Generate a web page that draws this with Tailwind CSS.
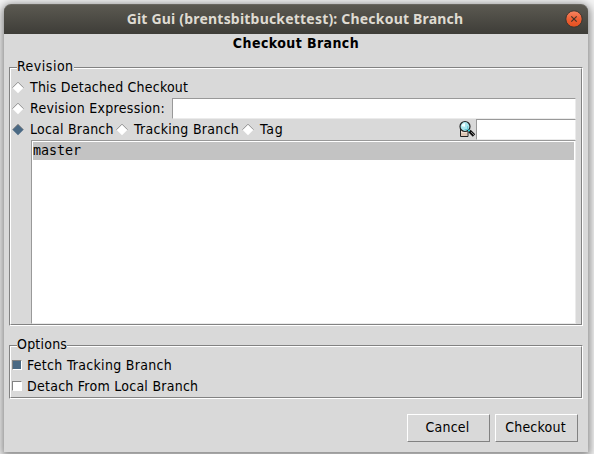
<!DOCTYPE html>
<html lang="en">
<head>
<meta charset="utf-8">
<title>Git Gui</title>
<script src="https://cdn.jsdelivr.net/npm/@tailwindcss/browser@4"></script>
</head>
<body class="w-[594px] h-[454px] overflow-hidden bg-[#f4f4f4] pt-1 pl-1 font-['DejaVu_Sans_Condensed','DejaVu_Sans',sans-serif] [font-stretch:condensed] text-[14px] tracking-[0.22px] text-black whitespace-nowrap">
<svg class="hidden">
  <symbol id="radio" viewBox="0 0 12 12"><path d="M6 0.2 11.5 5.7 6 11.2 0.5 5.7Z" fill="currentColor"/><path d="M0.5 5.7 6 0.2 11.5 5.7" fill="none" stroke="#858585" stroke-width="0.9"/></symbol>
</svg>
<main class="w-[584px] h-[448px] bg-[#d9d9d9] rounded-t-[7px] shadow-[0_2px_9px_2px_rgba(0,0,0,0.45)] flex flex-col">
  <header class="h-[30px] shrink-0 relative rounded-t-[7px] bg-linear-to-b from-[#5b5951] to-[#3e3d38] border-t border-[#696760] flex items-center justify-center text-[#dfdbd2] font-bold">
    <h1 class="font-['Noto_Sans','Open_Sans',sans-serif] [font-stretch:normal] text-[14px] tracking-[0.2px] pb-[2px] pr-[2px]">Git Gui (brentsbitbuckettest): Checkout Branch</h1>
    <svg class="absolute right-[5px] top-[5px]" width="18" height="18" viewBox="0 0 18 18">
      <defs><linearGradient id="o" x1="0" y1="0" x2="0" y2="1"><stop offset="0" stop-color="#f58563"/><stop offset="0.5" stop-color="#ef6035"/><stop offset="1" stop-color="#e2501f"/></linearGradient></defs>
      <circle cx="9" cy="9" r="8.2" fill="url(#o)" stroke="#383630"/><path d="M6.3 6.3 11.7 11.7M11.7 6.3 6.3 11.7" stroke="#443328" stroke-width="1.2"/>
    </svg>
  </header>
  <h2 class="h-[18px] leading-[18px] text-center font-bold tracking-[0.42px]">Checkout Branch</h2>
  <section class="mt-[15px] ml-[5px] w-[574px] h-[259px] border border-[#828282] border-r-white border-b-white">
    <div class="h-[257px] w-[572px] border border-white border-r-[#828282] border-b-[#828282]">
      <div class="h-[8px]"><span class="relative -top-[13px] left-[6px] inline-block h-[18px] leading-[18px] bg-[#d9d9d9] tracking-[0.5px]">Revision</span></div>
      <div class="h-[21px] flex items-center pl-px"><svg class="size-3 text-white"><use href="#radio"/></svg><span class="ml-[6px]">This Detached Checkout</span></div>
      <div class="h-[21px] flex items-center pl-px"><svg class="size-3 text-white"><use href="#radio"/></svg><span class="ml-[6px] w-[142px] tracking-[0.3px]">Revision Expression:</span><div class="w-[404px] h-[21px] bg-white border border-[#999] border-r-[#ebebeb] border-b-[#ebebeb]"></div></div>
      <div class="h-[21px] flex items-center pl-px">
        <svg class="size-3 text-[#4a6984]"><use href="#radio"/></svg><span class="ml-[6px] w-[86px]">Local Branch</span>
        <svg class="size-3 text-white"><use href="#radio"/></svg><span class="ml-[6px] w-[108px] tracking-[0.3px]">Tracking Branch</span>
        <svg class="size-3 text-white"><use href="#radio"/></svg><span class="ml-[6px] tracking-[0.8px]">Tag</span>
        <svg class="ml-auto" width="18" height="20" viewBox="0 0 18 20">
          <path d="M2.5 8V16.5H10V11" fill="#f1dfd2" stroke="#222"/><path d="M3 13h6v3H3z" fill="#dfc6b4"/>
          <circle cx="7" cy="6.5" r="5" fill="#a9e7ee" stroke="#222" stroke-width="1.2"/><path d="M3.7 6.2Q4 3.2 7 3.2V6.7Z" fill="#f4ffff"/><path d="M6.5 9.5h3.2V6.2" fill="none" stroke="#62c6d5"/>
          <path d="M11.5 11 16 15.5" stroke="#111" stroke-width="3.4"/><path d="M13 12 16 15" stroke="#888"/><path d="M10 10.5h2" stroke="#18d3e3" stroke-width="1.3"/>
        </svg>
        <div class="w-[100px] h-[21px] mr-[5px] bg-white border border-[#999] border-r-[#ebebeb] border-b-[#ebebeb]"></div>
      </div>
      <div class="ml-[20px] w-[545px] h-[184px] bg-white border border-[#999] border-r-[#ebebeb] border-b-[#ebebeb] p-px">
        <div class="h-[18px] leading-[18px] bg-[#c3c3c3] font-['DejaVu_Sans_Mono',monospace] [font-stretch:normal] text-[13.33px] tracking-normal">master</div>
      </div>
    </div>
  </section>
  <section class="mt-[19px] ml-[5px] w-[574px] h-[54px] border border-[#828282] border-r-white border-b-white">
    <div class="h-[52px] w-[572px] border border-white border-r-[#828282] border-b-[#828282]">
      <div class="h-[8px]"><span class="relative -top-[13px] left-[6px] inline-block h-[18px] leading-[18px] bg-[#d9d9d9]">Options</span></div>
      <div class="h-[21px] flex items-center pl-px"><i class="mb-px size-[10px] bg-[#4a6984] border border-[#828282] border-r-white border-b-white"></i><span class="ml-[5px] tracking-[0.3px]">Fetch Tracking Branch</span></div>
      <div class="h-[21px] flex items-center pl-px"><i class="mb-px size-[10px] bg-white border border-[#828282] border-r-white border-b-white"></i><span class="ml-[5px] tracking-[0.26px]">Detach From Local Branch</span></div>
    </div>
  </section>
  <footer class="mt-[15px] pr-[10px] flex justify-end gap-[5px]">
    <button class="w-[83px] h-[28px] leading-[22px] pb-[2px] pr-[2px] border border-white border-r-[#828282] border-b-[#828282]">Cancel</button>
    <button class="w-[83px] h-[28px] leading-[22px] pb-[2px] pr-[2px] border border-white border-r-[#828282] border-b-[#828282]">Checkout</button>
  </footer>
</main>
</body>
</html>
